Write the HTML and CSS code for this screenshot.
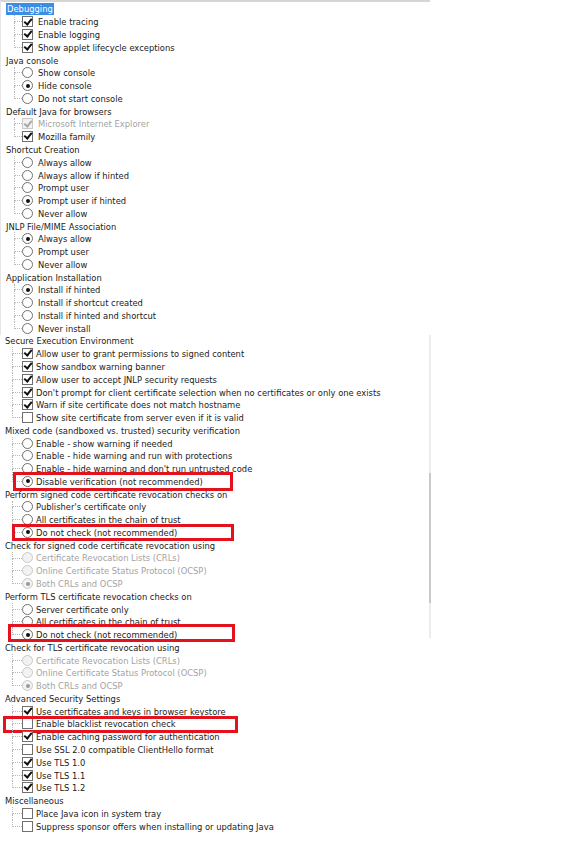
FILE: index.html
```html
<!DOCTYPE html>
<html lang="en">
<head>
<meta charset="utf-8">
<title>Java Control Panel - Advanced</title>
<link rel="stylesheet" href="styles.css">
</head>
<body>
<div class="panel-top">
  <div class="tree tree-a">
    <div class="row head"><span class="sel">Debugging</span></div>
    <div class="row item"><span class="branch"></span><span class="cb on"></span><span class="lbl">Enable tracing</span></div>
    <div class="row item"><span class="branch"></span><span class="cb on"></span><span class="lbl">Enable logging</span></div>
    <div class="row item last"><span class="branch"></span><span class="cb on"></span><span class="lbl">Show applet lifecycle exceptions</span></div>
    <div class="row head">Java console</div>
    <div class="row item"><span class="branch"></span><span class="rb"></span><span class="lbl">Show console</span></div>
    <div class="row item"><span class="branch"></span><span class="rb on"></span><span class="lbl">Hide console</span></div>
    <div class="row item last"><span class="branch"></span><span class="rb"></span><span class="lbl">Do not start console</span></div>
    <div class="row head">Default Java for browsers</div>
    <div class="row item dis"><span class="branch"></span><span class="cb on"></span><span class="lbl">Microsoft Internet Explorer</span></div>
    <div class="row item last"><span class="branch"></span><span class="cb on"></span><span class="lbl">Mozilla family</span></div>
    <div class="row head">Shortcut Creation</div>
    <div class="row item"><span class="branch"></span><span class="rb"></span><span class="lbl">Always allow</span></div>
    <div class="row item"><span class="branch"></span><span class="rb"></span><span class="lbl">Always allow if hinted</span></div>
    <div class="row item"><span class="branch"></span><span class="rb"></span><span class="lbl">Prompt user</span></div>
    <div class="row item"><span class="branch"></span><span class="rb on"></span><span class="lbl">Prompt user if hinted</span></div>
    <div class="row item last"><span class="branch"></span><span class="rb"></span><span class="lbl">Never allow</span></div>
    <div class="row head">JNLP File/MIME Association</div>
    <div class="row item"><span class="branch"></span><span class="rb on"></span><span class="lbl">Always allow</span></div>
    <div class="row item"><span class="branch"></span><span class="rb"></span><span class="lbl">Prompt user</span></div>
    <div class="row item last"><span class="branch"></span><span class="rb"></span><span class="lbl">Never allow</span></div>
    <div class="row head">Application Installation</div>
    <div class="row item"><span class="branch"></span><span class="rb on"></span><span class="lbl">Install if hinted</span></div>
    <div class="row item"><span class="branch"></span><span class="rb"></span><span class="lbl">Install if shortcut created</span></div>
    <div class="row item"><span class="branch"></span><span class="rb"></span><span class="lbl">Install if hinted and shortcut</span></div>
    <div class="row item last"><span class="branch"></span><span class="rb"></span><span class="lbl">Never install</span></div>
  </div>
</div>
<div class="panel-bottom">
  <div class="tree tree-b">
    <div class="row head">Secure Execution Environment</div>
    <div class="row item"><span class="branch"></span><span class="cb on"></span><span class="lbl">Allow user to grant permissions to signed content</span></div>
    <div class="row item"><span class="branch"></span><span class="cb on"></span><span class="lbl">Show sandbox warning banner</span></div>
    <div class="row item"><span class="branch"></span><span class="cb on"></span><span class="lbl">Allow user to accept JNLP security requests</span></div>
    <div class="row item"><span class="branch"></span><span class="cb on"></span><span class="lbl">Don't prompt for client certificate selection when no certificates or only one exists</span></div>
    <div class="row item"><span class="branch"></span><span class="cb on"></span><span class="lbl">Warn if site certificate does not match hostname</span></div>
    <div class="row item last"><span class="branch"></span><span class="cb"></span><span class="lbl">Show site certificate from server even if it is valid</span></div>
    <div class="row head">Mixed code (sandboxed vs. trusted) security verification</div>
    <div class="row item"><span class="branch"></span><span class="rb"></span><span class="lbl">Enable - show warning if needed</span></div>
    <div class="row item"><span class="branch"></span><span class="rb"></span><span class="lbl">Enable - hide warning and run with protections</span></div>
    <div class="row item"><span class="branch"></span><span class="rb"></span><span class="lbl">Enable - hide warning and don't run untrusted code</span></div>
    <div class="row item last mark mark-1"><span class="branch"></span><span class="rb on"></span><span class="lbl">Disable verification (not recommended)</span></div>
    <div class="row head">Perform signed code certificate revocation checks on</div>
    <div class="row item"><span class="branch"></span><span class="rb"></span><span class="lbl">Publisher's certificate only</span></div>
    <div class="row item"><span class="branch"></span><span class="rb"></span><span class="lbl">All certificates in the chain of trust</span></div>
    <div class="row item last mark mark-2"><span class="branch"></span><span class="rb on"></span><span class="lbl">Do not check (not recommended)</span></div>
    <div class="row head">Check for signed code certificate revocation using</div>
    <div class="row item dis"><span class="branch"></span><span class="rb"></span><span class="lbl">Certificate Revocation Lists (CRLs)</span></div>
    <div class="row item dis"><span class="branch"></span><span class="rb"></span><span class="lbl">Online Certificate Status Protocol (OCSP)</span></div>
    <div class="row item dis last"><span class="branch"></span><span class="rb on"></span><span class="lbl">Both CRLs and OCSP</span></div>
    <div class="row head">Perform TLS certificate revocation checks on</div>
    <div class="row item"><span class="branch"></span><span class="rb"></span><span class="lbl">Server certificate only</span></div>
    <div class="row item"><span class="branch"></span><span class="rb"></span><span class="lbl">All certificates in the chain of trust</span></div>
    <div class="row item last mark mark-3"><span class="branch"></span><span class="rb on"></span><span class="lbl">Do not check (not recommended)</span></div>
    <div class="row head">Check for TLS certificate revocation using</div>
    <div class="row item dis"><span class="branch"></span><span class="rb"></span><span class="lbl">Certificate Revocation Lists (CRLs)</span></div>
    <div class="row item dis"><span class="branch"></span><span class="rb"></span><span class="lbl">Online Certificate Status Protocol (OCSP)</span></div>
    <div class="row item dis last"><span class="branch"></span><span class="rb on"></span><span class="lbl">Both CRLs and OCSP</span></div>
    <div class="row head">Advanced Security Settings</div>
    <div class="row item"><span class="branch"></span><span class="cb on"></span><span class="lbl">Use certificates and keys in browser keystore</span></div>
    <div class="row item mark mark-4"><span class="branch"></span><span class="cb"></span><span class="lbl">Enable blacklist revocation check</span></div>
    <div class="row item"><span class="branch"></span><span class="cb on"></span><span class="lbl">Enable caching password for authentication</span></div>
    <div class="row item"><span class="branch"></span><span class="cb"></span><span class="lbl">Use SSL 2.0 compatible ClientHello format</span></div>
    <div class="row item"><span class="branch"></span><span class="cb on"></span><span class="lbl">Use TLS 1.0</span></div>
    <div class="row item"><span class="branch"></span><span class="cb on"></span><span class="lbl">Use TLS 1.1</span></div>
    <div class="row item last"><span class="branch"></span><span class="cb on"></span><span class="lbl">Use TLS 1.2</span></div>
    <div class="row head">Miscellaneous</div>
    <div class="row item"><span class="branch"></span><span class="cb"></span><span class="lbl">Place Java icon in system tray</span></div>
    <div class="row item last"><span class="branch"></span><span class="cb"></span><span class="lbl">Suppress sponsor offers when installing or updating Java</span></div>
  </div>
  <div class="scrollbar">
    <div class="track track-top"></div>
    <div class="thumb"></div>
    <div class="track track-bottom"></div>
  </div>
</div>
</body>
</html>
```

FILE: styles.css
```css
html, body {
  margin: 0;
  padding: 0;
  background: #ffffff;
}

body {
  font-family: "DejaVu Sans Condensed", "DejaVu Sans", sans-serif;
  font-stretch: condensed;
  font-size: 9.3px;
  color: #1a1a1a;
  width: 588px;
  height: 865px;
  overflow: hidden;
}

.panel-top {
  width: 429px;
  border-top: 2px solid #d6d6d6;
  border-left: 1px solid #e6e6e6;
  padding-top: 0.7px;
}

.panel-bottom {
  display: flex;
  align-items: flex-start;
}

.tree-b {
  width: 429px;
}

.row {
  height: 12.78px;
  display: flex;
  align-items: center;
  white-space: nowrap;
  position: relative;
}

.head {
  padding-left: 5px;
}

.sel {
  background: #3a8ee6;
  color: #ffffff;
  padding: 1px;
  line-height: 10px;
}

.tree-a .item {
  padding-left: 13px;
}

.tree-a .branch {
  width: 8px;
}

.tree-b .item {
  padding-left: 12px;
}

.tree-b .branch {
  width: 10px;
}

.branch {
  flex: none;
  align-self: stretch;
  display: flex;
  flex-direction: column;
}

.branch::before {
  content: "";
  flex: 1;
  border-left: 1px dotted #b8b8b8;
  border-bottom: 1px dotted #b8b8b8;
}

.branch::after {
  content: "";
  flex: 1;
  border-left: 1px dotted #b8b8b8;
}

.last .branch::after {
  border-left-color: transparent;
}

.cb {
  flex: none;
  width: 9px;
  height: 9px;
  border: 1px solid #707070;
  background: #ffffff;
  display: flex;
  align-items: center;
  justify-content: center;
}

.cb.on::after {
  content: "";
  width: 5.5px;
  height: 2.6px;
  border-left: 2px solid #111;
  border-bottom: 2px solid #111;
  transform: translate(0, -1.2px) rotate(-50deg);
}

.rb {
  flex: none;
  width: 9px;
  height: 9px;
  border: 1px solid #707070;
  border-radius: 50%;
  background: #ffffff;
  display: flex;
  align-items: center;
  justify-content: center;
}

.rb.on::after {
  content: "";
  width: 4px;
  height: 4px;
  border-radius: 50%;
  background: #111;
}

.tree-a .lbl {
  margin-left: 5px;
}

.tree-b .lbl {
  margin-left: 3px;
}

.dis {
  color: #a3a3a3;
}

.dis .cb,
.dis .rb {
  border-color: #c9c9c9;
  background: #f2f2f2;
}

.dis .cb.on::after {
  border-color: #a8a8a8;
}

.dis .rb.on::after {
  background: #9a9a9a;
}

/* red annotation frames drawn over the rows */
.mark::after {
  content: "";
  position: absolute;
  top: -3px;
  height: 13px;
  border: 3px solid #e3121c;
  pointer-events: none;
}

.mark-1::after {
  left: 13px;
  width: 214px;
}

.mark-2::after {
  left: 12px;
  top: -2px;
  height: 11px;
  width: 216px;
}

.mark-3::after {
  left: 8px;
  top: -4px;
  height: 12px;
  width: 221px;
}

.mark-4::after {
  left: 3px;
  top: -2px;
  height: 11px;
  width: 229px;
}

.scrollbar {
  flex: none;
  width: 2px;
  display: flex;
  flex-direction: column;
}

.track {
  background: #ececec;
}

.track-top {
  height: 138px;
}

.thumb {
  height: 130px;
  background: #c9c9c9;
}

.track-bottom {
  height: 35px;
}
```
